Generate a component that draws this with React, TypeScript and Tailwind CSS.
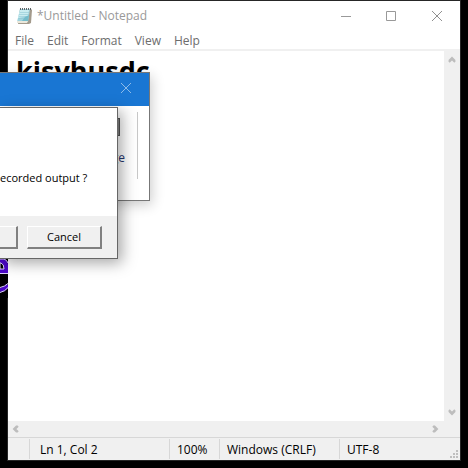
import React from "react";

const menus = ["File", "Edit", "Format", "View", "Help"];

function NotepadIcon() {
  return (
    <svg width="18" height="18" viewBox="0 0 18 18" aria-hidden="true">
      <path d="M4 2h11l1 1-1 13-2 1H2z" fill="#a39a8c" />
      <path d="M4 2h10l-2 13H1z" fill="#9fd3de" />
      <path d="M4 3h9l-1 6-10 2z" fill="#c9ecf0" />
      <path d="M4 5.500h9M3 7.500h10M3 9.500h10M2.500 11.500h10" stroke="#86c3d1" strokeWidth=".5" />
      <path d="M9 10l4-2-1 6H6z" fill="#74bccb" />
      <path d="M1 14h11l-1 2H1z" fill="#ebe8dc" />
      <path d="M4.500 1v2M6.500 1v2M8.500 1v2M10.500 1v2M12.500 1v2M14.500 1v2" stroke="#5d6366" />
    </svg>
  );
}

function Chevron({ d, label }: { d: string; label: string }) {
  return (
    <button aria-label={label} className="flex size-4 items-center justify-center">
      <svg width="8" height="8" viewBox="0 0 8 8" fill="none" stroke="#bdbdbd" strokeWidth="2" aria-hidden="true">
        <path d={d} />
      </svg>
    </button>
  );
}

function Notepad() {
  return (
    <main className="flex flex-1 flex-col border border-[#262626] bg-white">
      <header className="flex h-[29px] items-center pl-2 text-[#999]">
        <NotepadIcon />
        <h1 className="ml-[3px] flex-1 text-xs">*Untitled - Notepad</h1>
        <button aria-label="Minimize" className="flex h-full w-11 items-center justify-center">
          <svg width="10" height="10" stroke="#999" fill="none"><path d="M0 5.500h10" /></svg>
        </button>
        <button aria-label="Maximize" className="flex h-full w-[46px] items-center justify-center">
          <svg width="10" height="10" stroke="#999" fill="none"><path d="M.5.5h9v9h-9z" /></svg>
        </button>
        <button aria-label="Close" className="flex h-full w-[46px] items-center justify-center">
          <svg width="10" height="10" stroke="#909090" fill="none"><path d="M0 0l10 10M10 0L0 10" /></svg>
        </button>
      </header>
      <nav className="flex h-[21px] items-end gap-[13px] border-b-2 border-[#f0f0f0] pl-[7px] text-xs leading-4 text-[#6d6d6d]">
        {menus.map((m) => <button key={m}>{m}</button>)}
      </nav>
      <div className="flex flex-1">
        <textarea
          aria-label="Document"
          defaultValue="kjsyhusdc"
          spellCheck={false}
          className="flex-1 resize-none overflow-hidden bg-white pl-2 text-[27px] leading-10 font-bold text-black outline-none"
        />
        <div className="flex w-4 flex-col justify-between bg-[#f0f0f0] py-px">
          <Chevron label="Scroll up" d="M1 6l3-3 3 3M1 5l3-3 3 3" />
          <Chevron label="Scroll down" d="M1 2l3 3 3-3M1 3l3 3 3-3" />
        </div>
      </div>
      <div className="flex h-4 justify-between bg-[#f0f0f0] pr-[17px]">
        <Chevron label="Scroll left" d="M6 1L3 4l3 3M5 1L2 4l3 3" />
        <Chevron label="Scroll right" d="M2 1l3 3-3 3M3 1l3 3-3 3" />
      </div>
      <footer className="flex h-[23px] border-t border-[#d7d7d7] bg-[#f0f0f0] py-px text-xs leading-[22px] text-black">
        <span className="w-[22px] border-r border-[#d7d7d7]" />
        <span className="w-[140px] border-r border-[#d7d7d7] pl-[10px]">Ln 1, Col 2</span>
        <span className="w-[50px] border-r border-[#d7d7d7] pl-[7px]">100%</span>
        <span className="w-[120px] border-r border-[#d7d7d7] pl-[7px]">Windows (CRLF)</span>
        <span className="flex-1 pl-[7px]">UTF-8</span>
        <svg className="mr-px self-end" width="9" height="9" fill="#bfbfbf" aria-hidden="true">
          <path d="M6 0h2v2H6zM3 3h2v2H3zM6 3h2v2H6zM0 6h2v2H0zM3 6h2v2H3zM6 6h2v2H6z" />
        </svg>
      </footer>
    </main>
  );
}

function RecorderWindow() {
  return (
    <section className="absolute top-[72px] left-0 h-[129px] w-[150px] overflow-hidden border-y border-r border-[#777] bg-white shadow-[2px_4px_12px_rgba(0,0,0,0.2)]">
      <div className="flex h-[33px] justify-end bg-[#1976d3] pr-[17px]">
        <button aria-label="Close recorder" className="h-[30px]">
          <svg width="12" height="12" stroke="#8dbbe9" fill="none"><path d="M1 1l10 10M11 1L1 11" /></svg>
        </button>
      </div>
      <div className="flex justify-end gap-3 pt-[6px] pr-[11px]">
        <div className="flex flex-col items-end gap-[14px] pt-[6px] text-xs text-[#26376f]">
          <span className="mr-[5px] h-[18px] w-6 border border-[#555] bg-[#888]" />
          <span>ge</span>
        </div>
        <span className="h-[67px] w-px bg-[#c8c8c8]" />
      </div>
    </section>
  );
}

const buttonStyle =
  "h-[23px] border-t border-r-2 border-b-2 border-t-white border-l-white border-r-[#808080] border-b-[#808080] bg-[#f0f0f0]";

function ConfirmDialog() {
  return (
    <section role="dialog" aria-label="Save recording" className="absolute top-[107px] left-0 flex h-[152px] w-[118px] flex-col border-y border-r border-[#666] bg-white text-[11px] text-black shadow-[4px_4px_14px_rgba(0,0,0,0.35)]">
      <p className="flex-1 pt-[62px] leading-4 whitespace-nowrap">ecorded output ?</p>
      <div className="flex h-[42px] gap-[9px] bg-[#f0f0f0] pt-[10px]">
        <button aria-label="No" className={`${buttonStyle} w-[18px]`} />
        <button className={`${buttonStyle} w-[75px] border-l`}>Cancel</button>
      </div>
    </section>
  );
}

export default function App() {
  return (
    <div className="relative flex min-h-screen overflow-hidden bg-black pr-[7px] pb-[7px] pl-[7px] font-['Open_Sans','Noto_Sans',sans-serif]">
      <Notepad />
      <svg className="absolute top-[258px] left-0" width="8" height="40" fill="none" aria-hidden="true">
        <path d="M0 0h8v40H0z" fill="#000" />
        <path d="M0 1h5q3 2 3 6v8H0z" fill="#4b08c8" />
        <path d="M0 5h1q3 1 3 6H0z" fill="#000" stroke="#ddd0ff" />
        <path d="M0 1h4q3 1 4 4M0 15.500h8" stroke="#ddd0ff" />
        <path d="M0 32q6-1 8-5" stroke="#4b08c8" strokeWidth="4" />
        <path d="M0 34.500q5-1 8-5M0 29.500q5-1 8-4" stroke="#ddd0ff" />
      </svg>
      <RecorderWindow />
      <ConfirmDialog />
    </div>
  );
}
